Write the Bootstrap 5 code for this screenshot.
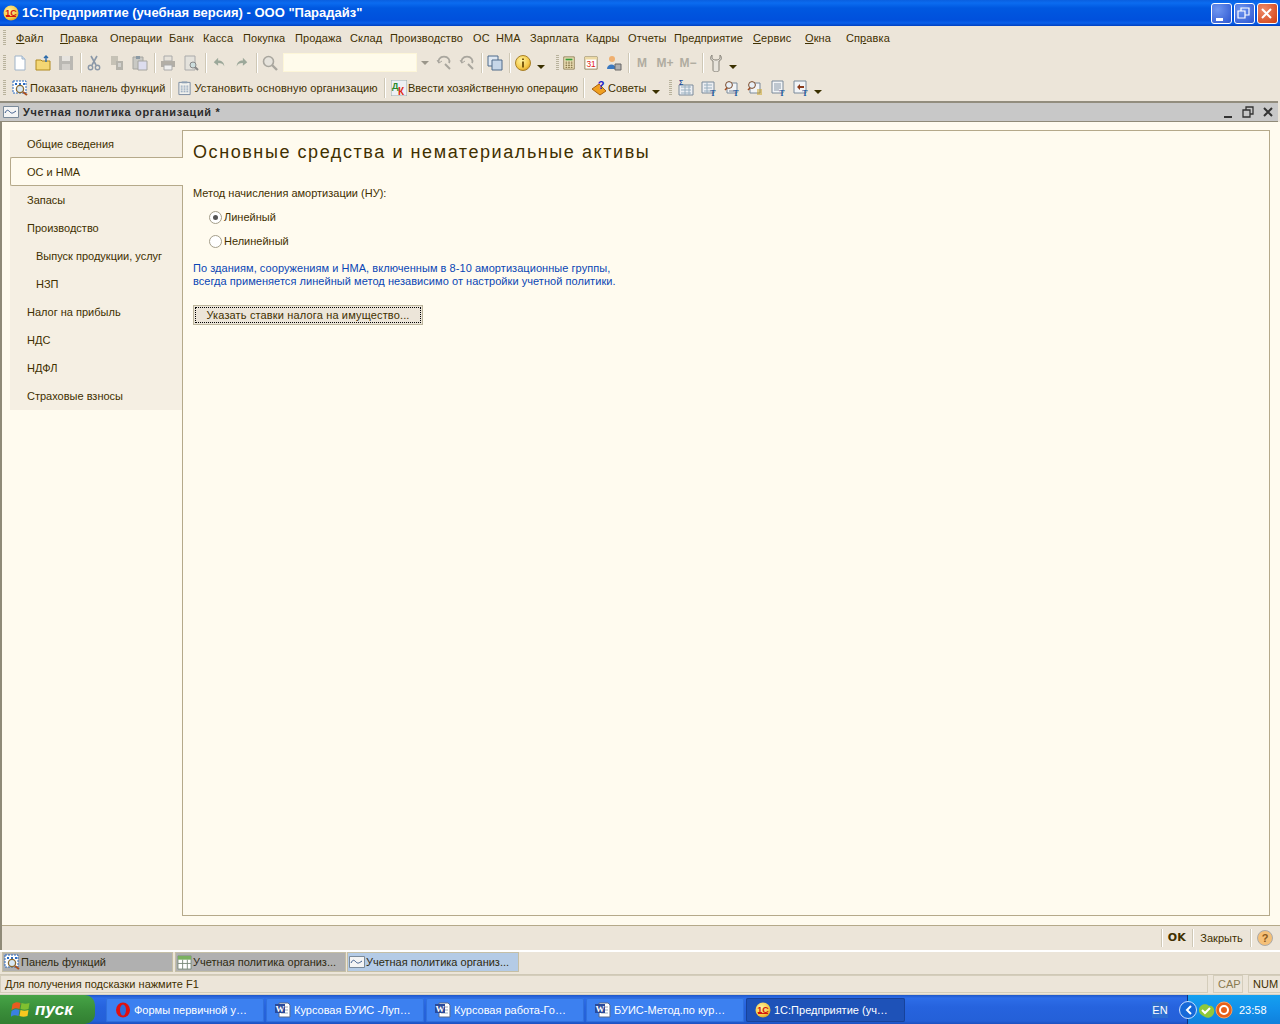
<!DOCTYPE html>
<html lang="ru"><head><meta charset="utf-8"><title>1С</title>
<link rel="stylesheet" href="https://cdn.jsdelivr.net/npm/bootstrap@5.3.0/dist/css/bootstrap.min.css">
<style>
html,body{margin:0;height:1024px;overflow:hidden}
body{width:1280px;background:#ece5d9;color:#3f3000;font:11px/14px "Liberation Sans",Arial,sans-serif}
.shell{height:1024px}
.flex-none{flex:none}
.ttl{height:26px;flex:none;background:linear-gradient(#0a5fe0 0,#0b6cf0 3px,#0058e0 8px,#0050dc 20px,#0a60ea 23px,#0040c0 26px);color:#fff;font-weight:700;font-size:13px;letter-spacing:0;padding-left:3px}
.ttl svg{margin-right:3px}
.wctl{padding-right:2px}
.wbtn{width:21px;height:21px;border:1px solid #fff;border-radius:3px;background:radial-gradient(circle at 30% 30%,#6f96f0,#2b55d0);margin-left:2px}
.wbtn.cl{background:radial-gradient(circle at 30% 30%,#ee8a68,#d03e10)}
.menubar{height:25px;flex:none;padding-bottom:2px;display:grid;grid-template-columns:16px 44px 50px 59px 34px 40px 52px 55px 40px 83px 23px 34px 56px 42px 46px 79px 52px 41px auto;align-items:center;font-size:11px;letter-spacing:.1px}
.menubar u{text-underline-offset:1px}
.grip{width:3px;height:16px;margin-left:3px;flex:none;background:repeating-linear-gradient(#b8b29c 0 1px,transparent 1px 2px)}
.tbar{height:25px;flex:none;display:flex;align-items:center;padding-bottom:2px}
.tbtn{width:23px;height:22px;display:flex;align-items:center;justify-content:center;flex:none}
.tbtn.thin{width:16px}
.tbtn.calcb{width:21px}
.tsep{width:5px;height:20px;flex:none;position:relative}
.tsep::after{content:"";position:absolute;left:2px;top:0;width:1px;height:20px;background:#cfc8b6;box-shadow:1px 0 0 #fff}
.caret-d{width:0;height:0;border:4px solid transparent;border-top:4px solid #3a3000;border-bottom:0;flex:none;margin-top:9px}
.caret-g{border-top-color:#9a968a;margin-top:0}
.caret-i{margin-left:2px}
.combo{width:134px;height:19px;margin-left:1px;background:#fffbeb;border:1px solid #fdf6d8;flex:none}
.g1{margin-right:2.5px}.g2{margin-left:11px}.g3{margin-right:6px}.g4{margin-left:9px;margin-right:2px}.c2{margin-left:1.5px}
.c3{margin-left:1px}
.tg4{flex:none;white-space:nowrap;letter-spacing:0}
.t1{width:137.5px;margin-left:2px;letter-spacing:.12px}
.t2{width:189.5px;padding-left:2.5px;letter-spacing:.12px}.i2{margin-left:4.5px}
.t3{width:174px;padding-left:1px}.i3{margin-left:4.5px}
.t4{width:45px;padding-left:1px}.i4{margin-left:5px}
.wg{opacity:.62;filter:grayscale(1)}
.mk{color:#b0aca0;font-size:12px;font-weight:700}
.chtitle{height:21px;flex:none;background:#c8c8c8;border-top:2px solid #928d7e;border-bottom:1px solid #8f8a78;font-weight:700;color:#2c2c2c;font-size:11px;letter-spacing:.68px;padding-left:3px;margin-right:2px}
.chbody{flex:1 1 auto;border-left:2px solid #8f8a78;min-height:0}
.paper{flex:1 1 auto;background:#fffbef;border-bottom:1px solid #b5a98a;padding:8px 10px 9px 8px;min-height:0}
.side{width:173px;flex:none}
.sitem{height:28px;background:#f5efe3;padding-left:17px;display:flex;align-items:center;border-right:1px solid #b5a98a}
.sitem.sub{padding-left:26px}
.sitem.on{background:#fffbef;border:1px solid #b5a98a;border-right:0;border-radius:2px 0 0 2px;padding-left:16px;margin-top:-1px;height:29px}
.sidefill{flex:1 1 auto;border-right:1px solid #b5a98a}
.pane{flex:1 1 auto;border:1px solid #b5a98a;border-left:0;padding:7px 10px}
.h-main{font-size:18px;line-height:28px;font-weight:400;letter-spacing:1.57px;margin:0 0 20px;color:#3f3000}
.lbl{margin-bottom:5px}
.radrow{height:24px;padding-left:16px;gap:2px}
.rad{width:13px;height:13px;border-radius:50%;background:#fff;border:1px solid #a49e8a;position:relative;flex:none}
.rad.sel::after{content:"";position:absolute;left:3px;top:3px;width:5px;height:5px;border-radius:50%;background:#555}
.note{color:#0a46b4;line-height:13px;margin-top:9px;letter-spacing:.05px}
.btn-prop{display:block;width:230px;height:20px;margin-top:17px;padding:0;background:#ece5d9;border:1px solid #bcb59c;outline:1px dotted #000;outline-offset:-3px;font-size:11px;line-height:16px;color:#3f3000;letter-spacing:.15px;border-radius:0}
.okbar{height:24px;flex:none;justify-content:flex-end;padding-right:7px}
.okbar .vs{width:1px;height:18px;background:#cfc8b6;box-shadow:1px 0 0 #fff;flex:none}
.okbtn{font-weight:700;font-family:"DejaVu Sans",sans-serif;font-size:11px;letter-spacing:.2px;padding:0 6px}
.clsb{width:57px;text-align:center}
.hlp{margin-left:6px}
.winbar{height:24px;flex:none;border-top:2px solid #fff;padding:0 0 0 2px;gap:2px}
.wtab{width:171px;height:20px;background:#b0b0b0;border:1px solid #c5bfa6;display:flex;align-items:center;padding-left:1px;gap:1px;color:#2e2a10;white-space:nowrap;overflow:hidden;flex:none}
.wtab.cur{background:#b4cbe6;width:172px;margin-left:-1px}
.stbar{height:20px;flex:none;border-top:1px solid #cfc8b6;gap:5px;padding:0 2px 1px 0}
.stcell{height:18px;border:1px solid #d4cdbb;display:flex;align-items:center;padding:0 0 1px 4px;flex:none}
.s-main{width:1208px}.s-cap{width:30px;color:#8a7a50}.s-num{width:33px}
.dock{height:30px;flex:none;background:linear-gradient(#1f57c8 0,#2d6de8 3px,#2663de 12px,#2460d8 26px,#1a4cb8 30px);color:#fff;position:relative;border-top:1px solid #d7d2c4}
.startb{width:95px;height:29px;background:linear-gradient(#47a447,#3a8f3a 50%,#327f32);border-radius:0 10px 10px 0;font:italic 700 17px/29px "Liberation Sans",sans-serif;color:#fff;padding-left:11px;gap:3px;flex:none}
.tk{width:158px;height:24px;margin-left:2px;background:#3c80f0;border-radius:2px;display:flex;align-items:center;padding-left:9px;gap:3px;white-space:nowrap;flex:none;box-shadow:inset 0 0 0 1px #3070dc;overflow:hidden}
.tk.first{margin-left:11px}
.tk.act{background:#1e52b8;width:159px;box-shadow:inset 0 0 0 1px #17429a}
.tray{width:93px;height:29px;background:linear-gradient(#14a0f0,#1290ea 50%,#0f80dc);border-left:1px solid #10307a;flex:none;gap:0;position:relative}
.tray svg{overflow:visible}
.clock{margin-left:5px}
.enl{width:16px;height:16px;background:#2e6ed0;margin-right:19px;text-align:center;line-height:16px;font-size:11px}
</style></head>
<body>
<svg width="0" height="0" class="position-absolute">
<defs>
<radialGradient id="gy" cx=".4" cy=".35" r=".7"><stop offset="0" stop-color="#fff3a0"/><stop offset=".7" stop-color="#f5c948"/><stop offset="1" stop-color="#d89a20"/></radialGradient>
<symbol id="one" viewBox="0 0 16 16"><circle cx="8" cy="8" r="7.5" fill="url(#gy)"/><text x="8" y="11" text-anchor="middle" font-size="9" font-weight="700" fill="#d4160c" font-family="Liberation Sans">1С</text><path d="M3 11.5h10" stroke="#d4160c"/></symbol>
<symbol id="doc" viewBox="0 0 16 16"><path d="M3 1h7l3 3v11H3z" fill="#fff" stroke="#9fb3c8"/><path d="M10 1v3h3" fill="#d0e0f0" stroke="#9fb3c8"/></symbol>
<symbol id="fold" viewBox="0 0 16 16"><path d="M1 5h5l1 1h8v9H1z" fill="#f4d774" stroke="#b08a20"/><path d="M11 7V1M9 3l2-2 2 2" fill="none" stroke="#2a6aaa" stroke-width="1.4"/></symbol>
<symbol id="save" viewBox="0 0 16 16"><path d="M1 1h14v14H1z" fill="#8aa0b6"/><path d="M4 1h8v5H4z" fill="#dde5ec"/><path d="M4 9h8v6H4z" fill="#b8c6d3"/></symbol>
<symbol id="cut" viewBox="0 0 16 16"><path d="M5 1l5 9M11 1l-5 9" stroke="#8b98a8" stroke-width="1.6" fill="none"/><circle cx="4.5" cy="12.5" r="2.2" fill="none" stroke="#8b98a8" stroke-width="1.4"/><circle cx="11.5" cy="12.5" r="2.2" fill="none" stroke="#8b98a8" stroke-width="1.4"/></symbol>
<symbol id="cpy" viewBox="0 0 16 16"><path d="M2 1h7v9H2z" fill="#c6c2b6"/><path d="M7 6h7v9H7z" fill="#b5b3ab"/><path d="M9 9h3M9 11h3" stroke="#eee"/></symbol>
<symbol id="pst" viewBox="0 0 16 16"><path d="M1 2h10v12H1z" fill="#c9c9c4" stroke="#a5a5a0"/><path d="M4 1h4v3H4z" fill="#8b9aa5"/><path d="M6 6h9v9H6z" fill="#dde" stroke="#a5a5a0"/></symbol>
<symbol id="prn" viewBox="0 0 16 16"><path d="M4 1h8v5H4z" fill="#e6e2da" stroke="#aaa"/><path d="M1 6h14v6H1z" fill="#b2aea6"/><path d="M4 10h8v5H4z" fill="#eee" stroke="#aaa"/></symbol>
<symbol id="pvw" viewBox="0 0 16 16"><path d="M2 1h10v14H2z" fill="#e4e2dc" stroke="#aaa"/><circle cx="10" cy="10" r="3" fill="#cdd" stroke="#888"/><path d="M12 12l3 3" stroke="#888" stroke-width="2"/></symbol>
<symbol id="undo" viewBox="0 0 16 16"><path d="M2 7l5-5v3c4 0 7 2 7 7-1-3-3-4-7-4v3z" fill="#9ca89a"/></symbol>
<symbol id="redo" viewBox="0 0 16 16"><path d="M14 7L9 2v3C5 5 2 7 2 12c1-3 3-4 7-4v3z" fill="#9ca89a"/></symbol>
<symbol id="find" viewBox="0 0 16 16"><circle cx="6.5" cy="6.5" r="5" fill="#e6e3dc" stroke="#a9a69e" stroke-width="1.6"/><path d="M10 10l5 5" stroke="#a9a69e" stroke-width="2.4"/></symbol>
<symbol id="fnx" viewBox="0 0 16 16"><path d="M3 8a5.5 4.5 0 1 1 10 0" fill="none" stroke="#a9a69e" stroke-width="1.8"/><path d="M9 9l5 5" stroke="#a9a69e" stroke-width="2"/><path d="M1 5l2 3 3-2" fill="none" stroke="#a9a69e"/></symbol>
<symbol id="wins" viewBox="0 0 16 16"><path d="M1 1h10v10H1z" fill="#dfe8f2" stroke="#4f6b8a"/><path d="M5 5h10v10H5z" fill="#c6d6e8" stroke="#4f6b8a"/></symbol>
<symbol id="inf" viewBox="0 0 16 16"><circle cx="8" cy="8" r="7.5" fill="url(#gy)" stroke="#a88028"/><path d="M8 3.5v1.6M8 6.5v6" stroke="#7a5a10" stroke-width="2"/></symbol>
<symbol id="calc" viewBox="0 0 16 16"><path d="M2 1h12v14H2z" fill="#f2e5bc" stroke="#8a7a50"/><path d="M4 3h8v2H4z" fill="#3a9a3a"/><path d="M4 7h2M7 7h2M10 7h2M4 9h2M7 9h2M10 9h2M4 11h2M7 11h2M10 11h2M4 13h2M7 13h2M10 13h2" stroke="#6b5a2a"/></symbol>
<symbol id="cal" viewBox="0 0 16 16"><path d="M1 1h14v14H1z" fill="#fff" stroke="#8a7a50"/><path d="M1 1h14v3H1z" fill="#ecd9a4"/><text x="8" y="13" text-anchor="middle" font-size="9.5" fill="#e02010" font-family="Liberation Sans">31</text></symbol>
<symbol id="usr" viewBox="0 0 16 16"><circle cx="6" cy="4" r="3" fill="#f0b070"/><path d="M1 14c0-6 9-6 9 0z" fill="#3a78c0"/><path d="M9 9h6v6H9z" fill="#b0b0b0" stroke="#666"/></symbol>
<symbol id="wr" viewBox="0 0 16 18"><path d="M4 1c-2 2-2 5 1 6v9c0 1 1 2 3 2s3-1 3-2V7c3-1 3-4 1-6v3c0 1-2 2-4 2S4 5 4 4z" fill="#e8e4dc" stroke="#868278"/></symbol>
<symbol id="pf" viewBox="0 0 16 16"><path d="M1 1h13v12H1z" fill="#fff" stroke="#2a6ac0" stroke-dasharray="2 1"/><path d="M3 4h2M7 4h2M11 4h2" stroke="#2a6ac0" stroke-width="2"/><circle cx="8" cy="9" r="3.6" fill="#d8e8f4" stroke="#8a6a30" stroke-width="1.3"/><path d="M11 12l4 3" stroke="#a85020" stroke-width="2"/></symbol>
<symbol id="clip" viewBox="0 0 16 16"><path d="M2 2h12v13H2z" fill="#f2f2ee" stroke="#788aa0"/><path d="M5 1h6v2H5z" fill="#8ea0b4"/><path d="M4 6h8M4 8h8M4 10h8M4 12h8" stroke="#7f96b2" stroke-dasharray="2 1"/></symbol>
<symbol id="dk" viewBox="0 0 16 16"><path d="M0 0h16v16H0z" fill="#eef0f4" stroke="#9aa"/><text x="1" y="9" font-size="9" font-weight="700" fill="#2a8a2a" font-family="Liberation Sans">Д</text><text x="7" y="15" font-size="10" font-weight="700" fill="#e02a14" font-family="Liberation Sans">К</text></symbol>
<symbol id="tip" viewBox="0 0 16 16"><path d="M1 9l7-5 7 7-6 4z" fill="#f0a020" stroke="#a86010"/><text x="10" y="9" font-size="11" font-weight="700" fill="#1820c8" font-family="Liberation Sans" text-anchor="middle">?</text></symbol>
<symbol id="sig" viewBox="0 0 16 16"><path d="M1 5h14v10H1z" fill="#eceef2" stroke="#7a8a9a"/><path d="M3 7h10M3 10h10M3 13h10M7 5v10M11 5v10" stroke="#9ab0c0"/><text x="1" y="5" font-size="7" font-weight="700" fill="#1a4a9a" font-family="Liberation Sans">Σ</text></symbol>
<symbol id="tbt" viewBox="0 0 16 16"><path d="M1 2h12v11H1z" fill="#eceef2" stroke="#7a8a9a"/><path d="M3 5h8M3 8h8M3 11h8M6 2v11" stroke="#9ab0c0"/><text x="12" y="16" font-size="8" font-weight="700" fill="#1a5aa0" font-family="Liberation Serif" text-anchor="middle">T</text></symbol>
<symbol id="zt" viewBox="0 0 16 16"><path d="M3 3h10v10H3z" fill="#f2f4f6" stroke="#7a8a9a"/><circle cx="5" cy="5" r="3.4" fill="#e8f0f8" stroke="#7a4a2a"/><path d="M3 8l-2 2" stroke="#a04a20" stroke-width="1.6"/><path d="M5 11h6" stroke="#7a8a9a"/><text x="12" y="16" font-size="8" font-weight="700" fill="#1a5aa0" font-family="Liberation Serif" text-anchor="middle">T</text></symbol>
<symbol id="zl" viewBox="0 0 16 16"><path d="M3 3h10v10H3z" fill="#f2f4f6" stroke="#7a8a9a"/><circle cx="5" cy="5" r="3.4" fill="#e8f0f8" stroke="#7a4a2a"/><path d="M3 8l-2 2" stroke="#a04a20" stroke-width="1.6"/><path d="M10 10h5M10 12h5M10 14h5" stroke="#c8a020"/></symbol>
<symbol id="dt" viewBox="0 0 16 16"><path d="M2 1h11v12H2z" fill="#f2f4f6" stroke="#7a8a9a"/><path d="M4 4h7M4 6h7M4 8h7M4 10h5" stroke="#8a9aaa"/><text x="12" y="16" font-size="8" font-weight="700" fill="#1a5aa0" font-family="Liberation Serif" text-anchor="middle">T</text></symbol>
<symbol id="at" viewBox="0 0 16 16"><path d="M1 1h12v12H1z" fill="#f2f4f6" stroke="#7a8a9a"/><path d="M4 7l3-3v2h4v2H7v2z" fill="#8a3a1a"/><text x="12" y="16" font-size="8" font-weight="700" fill="#1a5aa0" font-family="Liberation Serif" text-anchor="middle">T</text></symbol>
<symbol id="wave" viewBox="0 0 16 12"><path d="M.5.5h15v11H.5z" fill="#f4f4f4" stroke="#7a8a9a"/><path d="M2 7c2-4 3-3 5-1s3 1 6-1" fill="none" stroke="#3a5a8a"/></symbol>
<symbol id="grd" viewBox="0 0 16 16"><path d="M1 1h14v14H1z" fill="#fff" stroke="#7a8a7a"/><path d="M1 1h14v4H1z" fill="#7ab060"/><path d="M1 9h14M6 5v10M11 5v10" stroke="#7a8a7a"/></symbol>
<symbol id="opr" viewBox="0 0 16 16"><ellipse cx="8" cy="8" rx="7" ry="7.5" fill="#e01010"/><ellipse cx="8" cy="8" rx="3" ry="5.6" fill="#2d6de0"/></symbol>
<symbol id="wrd" viewBox="0 0 16 16"><path d="M4 1h9l2 2v12H4z" fill="#fff" stroke="#5a6a8a"/><path d="M6 5h7M6 8h7M6 11h7" stroke="#9ab"/><path d="M0 2h10v9H0z" fill="#2a4a9a"/><text x="5" y="10" text-anchor="middle" font-size="9" font-weight="700" fill="#fff" font-family="Liberation Serif">W</text></symbol>
</defs></svg>

<div class="shell d-flex flex-column">
<div class="ttl d-flex align-items-center"><svg width="16" height="16"><use href="#one"/></svg><span>1С:Предприятие (учебная версия) - ООО "Парадайз"</span>
<div class="ms-auto d-flex wctl"><div class="wbtn d-flex align-items-end justify-content-center"><svg width="13" height="13" viewBox="0 0 13 13"><path d="M2 8h7v3H2z" fill="#fff"/></svg></div><div class="wbtn d-flex align-items-center justify-content-center"><svg width="13" height="13" viewBox="0 0 13 13" fill="none" stroke="#fff" stroke-width="1.2"><path d="M1 4h7v7H1zM4 4V1h8v7H8"/></svg></div><div class="wbtn cl d-flex align-items-center justify-content-center"><svg width="13" height="13" viewBox="0 0 13 13" stroke="#fff" stroke-width="2"><path d="M2 2l9 9M11 2l-9 9"/></svg></div></div></div>

<div class="menubar"><div class="grip"></div><span><u>Ф</u>айл</span><span><u>П</u>равка</span><span>Операции</span><span>Банк</span><span>Касса</span><span>Покупка</span><span>Продажа</span><span>Склад</span><span>Производство</span><span>ОС</span><span>НМА</span><span>Зарплата</span><span>Кадры</span><span>Отчеты</span><span>Предприятие</span><span><u>С</u>ервис</span><span><u>О</u>кна</span><span>Сп<u>р</u>авка</span></div>

<div class="tbar"><div class="grip g1"></div>
<div class="tbtn"><svg width="16" height="16"><use href="#doc"/></svg></div><div class="tbtn"><svg width="16" height="16"><use href="#fold"/></svg></div><div class="tbtn wg"><svg width="16" height="16"><use href="#save"/></svg></div><div class="tsep"></div>
<div class="tbtn"><svg width="16" height="16"><use href="#cut"/></svg></div><div class="tbtn"><svg width="16" height="16"><use href="#cpy"/></svg></div><div class="tbtn"><svg width="16" height="16"><use href="#pst"/></svg></div><div class="tsep"></div>
<div class="tbtn"><svg width="16" height="16"><use href="#prn"/></svg></div><div class="tbtn"><svg width="16" height="16"><use href="#pvw"/></svg></div><div class="tsep"></div>
<div class="tbtn"><svg width="14" height="14"><use href="#undo"/></svg></div><div class="tbtn"><svg width="14" height="14"><use href="#redo"/></svg></div><div class="tsep"></div>
<div class="tbtn"><svg width="16" height="16"><use href="#find"/></svg></div><div class="combo"></div>
<div class="tbtn thin"><div class="caret-d caret-g"></div></div>
<div class="tbtn"><svg width="16" height="16"><use href="#fnx"/></svg></div><div class="tbtn"><svg width="16" height="16"><use href="#fnx"/></svg></div><div class="tsep"></div>
<div class="tbtn"><svg width="16" height="16"><use href="#wins"/></svg></div><div class="tsep"></div>
<div class="tbtn"><svg width="16" height="16"><use href="#inf"/></svg></div><div class="caret-d caret-i"></div><div class="grip g2"></div>
<div class="tbtn calcb"><svg width="14" height="16"><use href="#calc"/></svg></div><div class="tbtn"><svg width="14" height="16"><use href="#cal"/></svg></div><div class="tbtn"><svg width="16" height="16"><use href="#usr"/></svg></div><div class="tsep"></div>
<div class="tbtn"><b class="mk">M</b></div><div class="tbtn"><b class="mk">M+</b></div><div class="tbtn"><b class="mk">M−</b></div><div class="tsep"></div>
<div class="tbtn"><svg width="16" height="18"><use href="#wr"/></svg></div><div class="caret-d c3"></div>
</div>

<div class="tbar"><div class="grip g3"></div>
<svg width="16" height="16" class="flex-none"><use href="#pf"/></svg><span class="tg4 t1">Показать панель функций</span><div class="tsep"></div>
<svg width="15" height="16" class="flex-none i2"><use href="#clip"/></svg><span class="tg4 t2">Установить основную организацию</span><div class="tsep"></div>
<svg width="16" height="16" class="flex-none i3"><use href="#dk"/></svg><span class="tg4 t3">Ввести хозяйственную операцию</span><div class="tsep"></div>
<svg width="16" height="16" class="flex-none i4"><use href="#tip"/></svg><span class="tg4 t4">Советы</span><div class="caret-d"></div><div class="grip g4"></div>
<div class="tbtn"><svg width="16" height="16"><use href="#sig"/></svg></div><div class="tbtn"><svg width="16" height="16"><use href="#tbt"/></svg></div><div class="tbtn"><svg width="16" height="16"><use href="#zt"/></svg></div><div class="tbtn"><svg width="16" height="16"><use href="#zl"/></svg></div><div class="tbtn"><svg width="16" height="16"><use href="#dt"/></svg></div><div class="tbtn"><svg width="16" height="16"><use href="#at"/></svg></div><div class="caret-d c2"></div>
</div>

<div class="chtitle d-flex align-items-center"><svg width="16" height="12" class="me-1"><use href="#wave"/></svg><span>Учетная политика организаций *</span>
<div class="ms-auto d-flex align-items-center gap-2 pe-1"><svg width="12" height="12" viewBox="0 0 12 12"><path d="M2 10h8v2H2z" fill="#333"/></svg><svg width="12" height="12" viewBox="0 0 12 12" fill="none" stroke="#333" stroke-width="1.3"><path d="M1 4h7v7H1zM4 4V1h7v7H8"/></svg><svg width="12" height="12" viewBox="0 0 12 12" stroke="#333" stroke-width="2"><path d="M2 2l8 8M10 2l-8 8"/></svg></div></div>

<div class="chbody d-flex flex-column">
<div class="paper d-flex">
<div class="side d-flex flex-column"><div class="sitem">Общие сведения</div><div class="sitem on">ОС и НМА</div><div class="sitem">Запасы</div><div class="sitem">Производство</div><div class="sitem sub">Выпуск продукции, услуг</div><div class="sitem sub">НЗП</div><div class="sitem">Налог на прибыль</div><div class="sitem">НДС</div><div class="sitem">НДФЛ</div><div class="sitem">Страховые взносы</div><div class="sidefill"></div></div>
<div class="pane">
<h1 class="h-main">Основные средства и нематериальные активы</h1>
<div class="lbl">Метод начисления амортизации (НУ):</div>
<div class="radrow d-flex align-items-center"><span class="rad sel"></span>Линейный</div>
<div class="radrow d-flex align-items-center"><span class="rad"></span>Нелинейный</div>
<div class="note">По зданиям, сооружениям и НМА, включенным в 8-10 амортизационные группы,<br>всегда применяется линейный метод независимо от настройки учетной политики.</div>
<button class="btn btn-prop" type="button">Указать ставки налога на имущество...</button>
</div></div>
<div class="okbar d-flex align-items-center"><div class="vs"></div><span class="okbtn">OK</span><div class="vs"></div><span class="tg4 clsb">Закрыть</span><div class="vs"></div><svg width="16" height="16" class="hlp" viewBox="0 0 16 16"><circle cx="8" cy="8" r="7.5" fill="#f5c078" stroke="#aaa"/><text x="8" y="12" text-anchor="middle" font-size="11" font-weight="700" fill="#8a5a20" font-family="Liberation Sans">?</text></svg></div>
</div>

<div class="winbar d-flex"><div class="wtab"><svg width="16" height="16" class="flex-none"><use href="#pf"/></svg>Панель функций</div><div class="wtab"><svg width="15" height="15" class="flex-none"><use href="#grd"/></svg>Учетная политика организ...</div><div class="wtab cur"><svg width="16" height="12" class="flex-none"><use href="#wave"/></svg>Учетная политика организ...</div></div>
<div class="stbar d-flex"><div class="stcell s-main">Для получения подсказки нажмите F1</div><div class="stcell s-cap">CAP</div><div class="stcell s-num">NUM</div></div>
<div class="dock d-flex align-items-center"><div class="startb d-flex align-items-center"><svg width="21" height="20" viewBox="0 0 20 20"><path d="M1 4c3-2 5-2 8-1l-1 6c-3-1-5-1-8 1z" fill="#e85c20"/><path d="M10 3c3 1 5 1 8 0l-1 6c-3 1-5 1-8 0z" fill="#80c030"/><path d="M0 11c3-2 5-2 8-1l-1 6c-3-1-5-1-8 1z" fill="#3a80e0"/><path d="M9 10c3 1 5 1 8 0l-1 6c-3 1-5 1-8 0z" fill="#f8c820"/></svg><span>пуск</span></div>
<div class="tk first"><svg width="16" height="16"><use href="#opr"/></svg>Формы первичной у…</div><div class="tk"><svg width="16" height="16"><use href="#wrd"/></svg>Курсовая БУИС -Луп…</div><div class="tk"><svg width="16" height="16"><use href="#wrd"/></svg>Курсовая работа-Го…</div><div class="tk"><svg width="16" height="16"><use href="#wrd"/></svg>БУИС-Метод.по кур…</div><div class="tk act"><svg width="16" height="16"><use href="#one"/></svg>1С:Предприятие (уч…</div>
<div class="enl ms-auto">EN</div>
<div class="tray d-flex align-items-center"><svg width="46" height="18" viewBox="0 0 46 18" class="flex-none"><circle cx="0" cy="9" r="8.5" fill="#1668d8" stroke="#c8e0ff"/><path d="M3 5L-1 9l4 4" fill="none" stroke="#fff" stroke-width="2"/><path d="M11 9c0-6 8-7 10-4 4-1 6 3 5 7s-6 6-9 4-6-3-6-7z" fill="#90c83a"/><path d="M14 9l3 3 5-5" fill="none" stroke="#fff" stroke-width="2"/><circle cx="36" cy="9" r="8" fill="#e86018" stroke="#f8a060"/><circle cx="36" cy="9" r="4" fill="none" stroke="#fff" stroke-width="2"/></svg><span class="clock">23:58</span></div></div>
</div>
</body></html>
